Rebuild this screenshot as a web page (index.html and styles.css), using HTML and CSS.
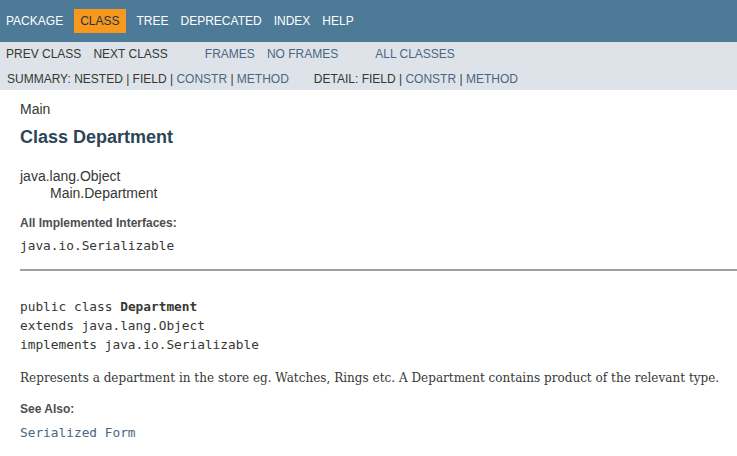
FILE: index.html
```html
<!DOCTYPE html>
<html lang="en">
<head>
<meta charset="utf-8">
<title>Department</title>
<link rel="stylesheet" href="styles.css">
</head>
<body>
<div class="topNav">
  <ul class="navList">
    <li><a href="#">Package</a></li>
    <li class="navBarCell1Rev">Class</li>
    <li><a href="#">Tree</a></li>
    <li><a href="#">Deprecated</a></li>
    <li><a href="#">Index</a></li>
    <li><a href="#">Help</a></li>
  </ul>
</div>
<div class="subNav">
  <div class="subRow">
    <ul class="navList">
      <li>Prev Class</li>
      <li>Next Class</li>
    </ul>
    <ul class="navList">
      <li><a href="#">Frames</a></li>
      <li><a href="#">No Frames</a></li>
    </ul>
    <ul class="navList">
      <li><a href="#">All Classes</a></li>
    </ul>
  </div>
  <div class="subRow second">
    <ul class="subNavList">
      <li>Summary:&nbsp;</li>
      <li>Nested&nbsp;|&nbsp;</li>
      <li>Field&nbsp;|&nbsp;</li>
      <li><a href="#">Constr</a>&nbsp;|&nbsp;</li>
      <li><a href="#">Method</a></li>
    </ul>
    <ul class="subNavList">
      <li>Detail:&nbsp;</li>
      <li>Field&nbsp;|&nbsp;</li>
      <li><a href="#">Constr</a>&nbsp;|&nbsp;</li>
      <li><a href="#">Method</a></li>
    </ul>
  </div>
</div>
<div class="header">
  <div class="subTitle">Main</div>
  <h2 class="title">Class Department</h2>
</div>
<div class="contentContainer">
  <ul class="inheritance">
    <li>java.lang.Object</li>
    <li>
      <ul class="inheritance inner">
        <li>Main.Department</li>
      </ul>
    </li>
  </ul>
  <dl class="impl">
    <dt>All Implemented Interfaces:</dt>
    <dd>java.io.Serializable</dd>
  </dl>
  <hr class="rule">
  <pre class="sig">public class <b>Department</b>
extends java.lang.Object
implements java.io.Serializable</pre>
  <div class="block">Represents a department in the store eg. Watches, Rings etc. A Department contains product of the relevant type.</div>
  <dl class="seeAlso">
    <dt>See Also:</dt>
    <dd><a href="#">Serialized Form</a></dd>
  </dl>
</div>
</body>
</html>
```
FILE: styles.css
```css
html, body {
  margin: 0;
  padding: 0;
  background: #ffffff;
}
body {
  font-family: "Liberation Sans", Arial, sans-serif;
  font-size: 14px;
  color: #353833;
}
a {
  color: #4a6782;
  text-decoration: none;
}
.topNav {
  background-color: #4d7a97;
  color: #ffffff;
  height: 33px;
  padding-top: 9px;
  font-size: 12px;
  overflow: hidden;
}
.topNav a {
  color: #ffffff;
}
ul.navList,
ul.subNavList {
  display: flex;
  margin: 0 25px 0 0;
  padding: 0;
  list-style: none;
}
ul.navList li {
  padding: 5px 6px;
  line-height: 14px;
  text-transform: uppercase;
}
.navBarCell1Rev {
  background-color: #f8981d;
  color: #253441;
  margin: 0 5px;
}
.subNav {
  background-color: #dee3e9;
  font-size: 12px;
  height: 48px;
}
.subRow {
  display: flex;
}
.subRow.second {
  padding: 6px 0 4px 7px;
}
ul.subNavList li {
  line-height: 14px;
  text-transform: uppercase;
  white-space: pre;
}
.header {
  margin: 0 20px;
  padding-top: 6px;
}
.subTitle {
  margin-top: 5px;
  line-height: 16px;
}
.title {
  color: #2c4557;
  font-size: 18px;
  line-height: 21px;
  margin: 10px 0;
}
.contentContainer {
  padding: 10px 0 10px 20px;
}
ul.inheritance {
  margin: 0;
  padding: 0;
  list-style: none;
  line-height: 16px;
}
ul.inheritance.inner {
  margin-left: 15px;
  padding-left: 15px;
  padding-top: 1px;
}
dl {
  margin: 0;
}
dt {
  font-size: 12px;
  font-weight: bold;
  color: #4e4e4e;
  line-height: 14px;
}
dd {
  margin: 0;
  font-family: "DejaVu Sans Mono", monospace;
  font-size: 12.8px;
  line-height: 17px;
}
.impl dt {
  margin-top: 15px;
}
.impl dd {
  margin-top: 7px;
}
.rule {
  margin: 15px 0 0 0;
  height: 0;
  border: none;
  border-top: 2px solid #a0a0a0;
}
.sig {
  margin: 26px 0 0 0;
  font-family: "DejaVu Sans Mono", monospace;
  font-size: 12.8px;
  line-height: 19px;
  color: #353833;
}
.block {
  margin-top: 15px;
  font-family: "DejaVu Serif", Georgia, serif;
  font-size: 12px;
  letter-spacing: 0.02px;
  line-height: 18px;
  white-space: nowrap;
}
.seeAlso dt {
  margin-top: 15px;
}
.seeAlso dd {
  margin-top: 8px;
  color: #4a6782;
}
.seeAlso dd a {
  color: #4a6782;
}
```
